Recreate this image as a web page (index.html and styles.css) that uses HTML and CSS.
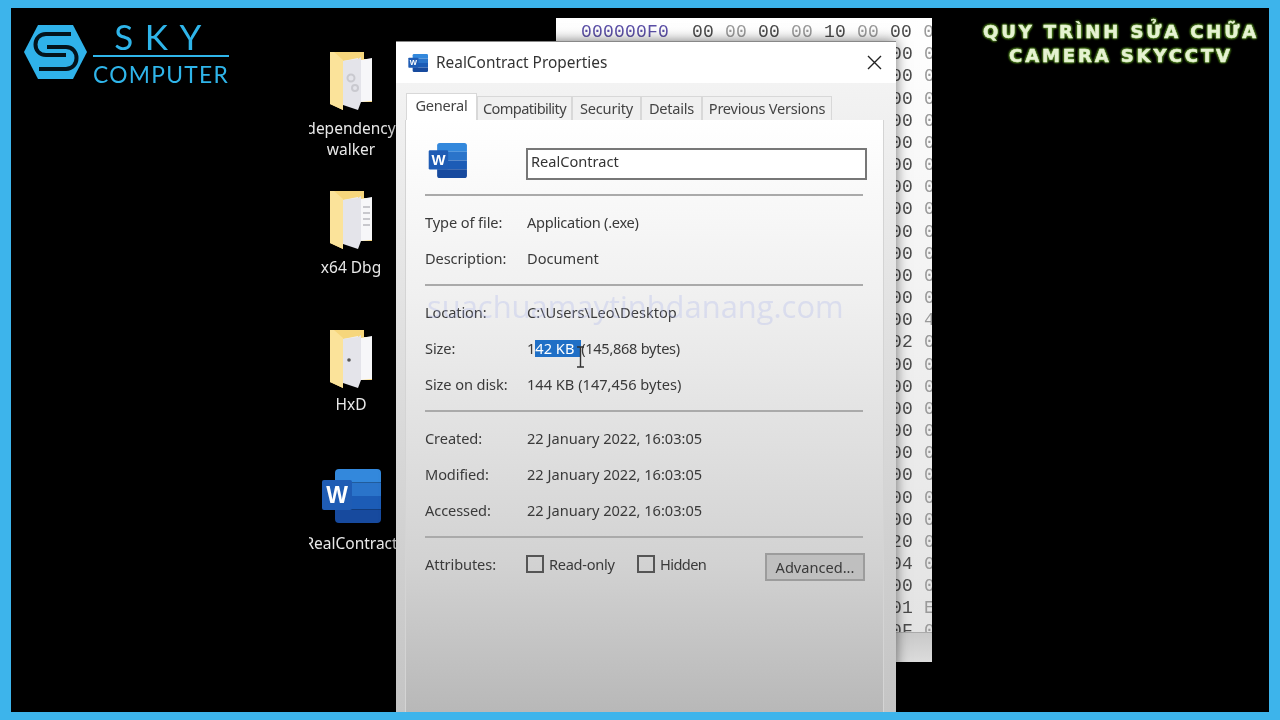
FILE: index.html
```html
<!DOCTYPE html>
<html lang="en">
<head>
<meta charset="utf-8">
<title>RealContract Properties</title>
<link rel="stylesheet" href="styles.css">
</head>
<body>
<svg class="defs" width="0" height="0" aria-hidden="true">
  <symbol id="folder" viewBox="0 0 42 60">
    <path d="M0 0H34V7H42V50H13V58L0 52Z" fill="#f6d67c"/>
    <path d="M0 0H4L13 8V58L0 52Z" fill="#fbe39a"/>
    <path d="M13 9L28 6V48L13 52Z" fill="#f0f0f2"/>
    <path d="M28 7L31 5V50L28 58L13 53V9Z" fill="#e4e4ea"/>
    <path d="M31 8L42 6V49L31 50Z" fill="#f7f7f9"/>
  </symbol>
  <symbol id="wordicon" viewBox="0 0 60 54">
    <path d="M18 0H56Q60 0 60 4V13.5H14V4Q14 0 18 0Z" fill="#3388dc"/>
    <rect x="14" y="13.5" width="46" height="13.5" fill="#2a74ca"/>
    <rect x="14" y="27" width="46" height="13.5" fill="#1c5cb6"/>
    <path d="M14 40.5H60V50Q60 54 56 54H18Q14 54 14 50Z" fill="#174a9e"/>
    <rect x="1" y="11" width="30" height="30" rx="2" fill="#1f5cb4"/>
    <text x="16" y="34" class="word-w">W</text>
  </symbol>
</svg>
<div class="frame">
  <main class="stage">
    <div class="logo">
      <svg class="logo-mark" viewBox="0 0 63 54" aria-hidden="true">
        <path d="M14 0H49L63 27L49 54H14L0 27Z" fill="#2fb2ea"/>
        <path d="M47 9H22C8 9 8 30 22 30H42" fill="none" stroke="#04141c" stroke-width="4"/>
        <path d="M15 44H42C56 44 56 22 42 22H23" fill="none" stroke="#04141c" stroke-width="4"/>
      </svg>
      <div class="logo-text">
        <div class="logo-sky">SKY</div>
        <div class="logo-computer">COMPUTER</div>
      </div>
    </div>

    <div class="channel-title">
      <div>QUY TRÌNH SỬA CHỮA</div>
      <div>CAMERA SKYCCTV</div>
    </div>

    <section class="desktop">
      <div class="desk-icon">
        <svg class="folder-img" viewBox="0 0 42 60"><use href="#folder" width="42" height="60"/><circle cx="21" cy="26" r="3.5" class="mark"/><circle cx="25" cy="36" r="3" class="mark"/></svg>
        <div class="desk-label">dependency<br>walker</div>
      </div>
      <div class="desk-icon">
        <svg class="folder-img" viewBox="0 0 42 60"><use href="#folder" width="42" height="60"/><path d="M33 16H40M33 22H40M33 28H40M33 34H40" class="mark-line"/></svg>
        <div class="desk-label">x64 Dbg</div>
      </div>
      <div class="desk-icon">
        <svg class="folder-img" viewBox="0 0 42 60"><use href="#folder" width="42" height="60"/><circle cx="19" cy="30" r="1.8" class="mark-dark"/></svg>
        <div class="desk-label tight">HxD</div>
      </div>
      <div class="desk-icon">
        <svg class="word-desk"><use href="#wordicon"/></svg>
        <div class="desk-label loose">RealContract</div>
      </div>
    </section>

    <section class="hex">
      <div class="hex-rows">
        <div class="hex-row first"><span class="off">000000F0</span>  00 <i>00</i> 00 <i>00</i> 10 <i>00</i> 00 <i>00</i></div>
        <div class="hex-row">00 <i>00</i></div>
        <div class="hex-row">00 <i>00</i></div>
        <div class="hex-row">00 <i>00</i></div>
        <div class="hex-row">00 <i>00</i></div>
        <div class="hex-row">00 <i>00</i></div>
        <div class="hex-row">00 <i>00</i></div>
        <div class="hex-row">00 <i>00</i></div>
        <div class="hex-row">00 <i>00</i></div>
        <div class="hex-row">00 <i>00</i></div>
        <div class="hex-row">00 <i>00</i></div>
        <div class="hex-row">00 <i>00</i></div>
        <div class="hex-row">00 <i>00</i></div>
        <div class="hex-row">00 <i>40</i></div>
        <div class="hex-row">02 <i>00</i></div>
        <div class="hex-row">00 <i>00</i></div>
        <div class="hex-row">00 <i>00</i></div>
        <div class="hex-row">00 <i>00</i></div>
        <div class="hex-row">00 <i>00</i></div>
        <div class="hex-row">00 <i>00</i></div>
        <div class="hex-row">00 <i>00</i></div>
        <div class="hex-row">00 <i>00</i></div>
        <div class="hex-row">00 <i>00</i></div>
        <div class="hex-row">20 <i>00</i></div>
        <div class="hex-row">04 <i>00</i></div>
        <div class="hex-row">00 <i>00</i></div>
        <div class="hex-row">01 <i>E0</i></div>
        <div class="hex-row">0F <i>00</i></div>
      </div>
      <div class="hex-status"></div>
    </section>

    <section class="dialog">
      <header class="titlebar">
        <svg class="title-icon"><use href="#wordicon"/></svg>
        <span class="title-text">RealContract Properties</span>
        <svg class="close" viewBox="0 0 15 15" aria-hidden="true"><path d="M1 1L14 14M14 1L1 14" stroke="#222" stroke-width="1.4" fill="none"/></svg>
      </header>
      <nav class="tabs">
        <span class="tab active">General</span>
        <span class="tab t-compat">Compatibility</span>
        <span class="tab t-sec">Security</span>
        <span class="tab t-det">Details</span>
        <span class="tab t-prev">Previous Versions</span>
      </nav>
      <div class="panel">
        <div class="name-row">
          <svg class="file-icon"><use href="#wordicon"/></svg>
          <div class="name-input">RealContract</div>
        </div>
        <div class="sep"></div>
        <div class="group">
          <div class="row"><span class="lbl">Type of file:</span><span class="narrow">Application (.exe)</span></div>
          <div class="row"><span class="lbl">Description:</span><span>Document</span></div>
        </div>
        <div class="sep"></div>
        <div class="group">
          <div class="row"><span class="lbl">Location:</span><span>C:\Users\Leo\Desktop</span></div>
          <div class="row"><span class="lbl">Size:</span><span>1<span class="sel">42 KB </span><span class="narrow">(145,868 bytes)</span></span></div>
          <div class="row"><span class="lbl">Size on disk:</span><span>144 KB (147,456 bytes)</span></div>
        </div>
        <div class="sep"></div>
        <div class="group">
          <div class="row"><span class="lbl">Created:</span><span>22 January 2022, 16:03:05</span></div>
          <div class="row"><span class="lbl">Modified:</span><span>22 January 2022, 16:03:05</span></div>
          <div class="row"><span class="lbl">Accessed:</span><span>22 January 2022, 16:03:05</span></div>
        </div>
        <div class="sep"></div>
        <div class="group">
          <div class="row">
            <span class="lbl">Attributes:</span>
            <span class="check"><span class="box"></span>Read-only</span>
            <span class="check c-hidden"><span class="box"></span>Hidden</span>
            <span class="btn">Advanced...</span>
          </div>
        </div>
      </div>
      <div class="watermark">suachuamaytinhdanang.com</div>
      <svg class="ibeam" viewBox="0 0 9 22" aria-hidden="true"><path d="M1 1H8M4.5 1V21M1 21H8" stroke="#333" stroke-width="1.4" fill="none"/></svg>
    </section>
  </main>
</div>
</body>
</html>
```
FILE: styles.css
```css
* { box-sizing: border-box; }
html, body { margin: 0; padding: 0; background: #3db4eb; }
.defs { position: absolute; }
.frame {
  width: 1280px;
  height: 720px;
  padding: 8px 11px;
  background: #3db4eb;
  overflow: hidden;
}
.stage {
  position: relative;
  width: 1258px;
  height: 704px;
  background: #000;
  overflow: hidden;
  font-family: "Noto Sans", "Open Sans", sans-serif;
  filter: blur(.4px);
}

/* logo */
.logo {
  position: absolute;
  left: 13px;
  top: 15px;
  display: flex;
  gap: 6px;
  color: #2fb5ea;
}
.logo-mark { width: 63px; height: 54px; margin-top: 2px; }
.logo-text { width: 136px; font-family: "Lato", sans-serif; font-weight: 400; }
.logo-sky {
  height: 34px;
  border-bottom: 2px solid #2fb5ea;
  font-size: 35px;
  line-height: 27px;
  letter-spacing: 11.5px;
  text-align: center;
  padding-left: 5px;
}
.logo-computer {
  margin-top: 3px;
  font-size: 22.8px;
  line-height: 28px;
  letter-spacing: 1.3px;
  white-space: nowrap;
}

/* top-right caption */
.channel-title {
  position: absolute;
  left: 950px;
  top: 11.5px;
  width: 320px;
  text-align: center;
  font-family: "DejaVu Sans", sans-serif;
  font-weight: 700;
  font-size: 18px;
  line-height: 24.5px;
  letter-spacing: 2.9px;
  color: #e6f3d2;
  -webkit-text-stroke: .5px #e6f3d2;
  text-shadow: 0 0 2px #4a7a1c, 0 0 3px #4a7a1c, 1px 1px 2px #3f6a18, -1px -1px 2px #3f6a18, 1px -1px 2px #3f6a18, -1px 1px 2px #3f6a18;
  white-space: nowrap;
}

/* desktop icons */
.desktop {
  position: absolute;
  left: 298px;
  top: 44px;
  width: 87px;
  height: 660px;
  padding-right: 3px;
  overflow: hidden;
  color: #e8e8e8;
  font-size: 15.5px;
  line-height: 21px;
}
.desk-icon {
  height: 139px;
  display: flex;
  flex-direction: column;
  align-items: center;
}
.folder-img { width: 42px; height: 60px; flex: none; }
.mark { fill: none; stroke: #c9c9cf; stroke-width: 2; }
.mark-line { fill: none; stroke: #b9b9bf; stroke-width: 1.5; }
.mark-dark { fill: #555; }
.word-desk { width: 60px; height: 54px; flex: none; }
.desk-label {
  margin-top: 6px;
  text-align: center;
  white-space: nowrap;
}
.desk-label.tight { margin-top: 4px; }
.desk-label.loose { margin-top: 10px; }

/* hex editor behind */
.hex {
  position: absolute;
  left: 545px;
  top: 10px;
  width: 376px;
  height: 644px;
  background: linear-gradient(#fff, #e2e2e2);
  display: flex;
  flex-direction: column;
  overflow: hidden;
}
.hex-rows {
  height: 614px;
  padding-top: 3px;
  overflow: hidden;
  font-family: "Liberation Mono", monospace;
  font-size: 18px;
  line-height: 22.17px;
  letter-spacing: .2px;
  color: #4a4a4a;
}
.hex-rows i { font-style: normal; color: #9a9a9a; }
.hex-row { padding-left: 335px; white-space: pre; }
.hex-row.first { padding-left: 25px; }
.off { color: #5b4fa6; margin-right: 1px; }
.hex-status {
  height: 30px;
  background: linear-gradient(#c9c9c9, #dcdcdc);
  border-top: 1px solid #aaa;
}

/* properties dialog */
.dialog {
  position: absolute;
  left: 385px;
  top: 33px;
  width: 500px;
  height: 671px;
  background: linear-gradient(#f6f6f6, #c4c4c4);
  border-top: 1px solid #888;
  box-shadow: 0 0 12px rgba(0,0,0,.55);
  color: #3a3a3a;
  font-size: 14.6px;
}
.titlebar {
  height: 41px;
  background: #fff;
  display: flex;
  align-items: center;
  padding: 0 14px 0 12px;
}
.title-icon { width: 20px; height: 18px; margin-right: 8px; }
.title-text { flex: 1; font-size: 15.4px; color: #333; }
.close { width: 15px; height: 15px; }
.tabs {
  height: 37px;
  padding-left: 10px;
  display: flex;
  align-items: flex-end;
}
.tab {
  height: 24px;
  line-height: 22px;
  background: #f0f0f0;
  border: 1px solid #d8d8d8;
  border-bottom: 0;
  text-align: center;
  color: #444;
  letter-spacing: -.25px;
}
.tab.active { width: 71px; height: 27px; line-height: 23px; background: #fff; }
.tab.t-compat { width: 95px; letter-spacing: -.6px; }
.t-sec { width: 69px; }
.t-det { width: 61px; }
.t-prev { width: 130px; }
.panel {
  position: relative;
  margin: 0 12px 0 9px;
  height: 592px;
  padding: 23px 20px 0 19px;
  background: linear-gradient(#fff 0%, #f0f0f0 30%, #d2d2d2 75%, #b8b8b8 100%);
  border: 1px solid #d4d4d4;
  border-bottom: 0;
  border-top: 0;
}
.name-row { height: 51px; display: flex; align-items: flex-start; }
.file-icon { width: 39px; height: 35px; margin: 0 59px 0 3px; flex: none; }
.name-input {
  width: 341px;
  height: 32px;
  margin-top: 5px;
  border: 2px solid #777;
  background: #fff;
  padding-left: 3px;
  line-height: 23px;
  color: #333;
  flex: none;
}
.sep { height: 2px; margin: 0 0 8px; background: #aaa; }
.group { margin-bottom: 8px; }
.row { height: 36px; display: flex; align-items: center; white-space: pre; }
.lbl { width: 102px; flex: none; }
.row .lbl { letter-spacing: -.1px; }
.narrow { letter-spacing: -.3px; }
.sel { background: #1f6fc6; color: #fff; display: inline-block; line-height: 17px; padding-right: 3px; }
.check { display: flex; align-items: center; flex: none; width: 111px; margin-left: -1px; letter-spacing: -.3px; }
.box {
  width: 18px;
  height: 18px;
  border: 2px solid #555;
  margin-right: 5px;
  flex: none;
}
.check.c-hidden { width: 128px; margin-left: 0; letter-spacing: -.6px; }
.btn {
  flex: none;
  width: 100px;
  height: 28px;
  line-height: 24px;
  text-align: center;
  border: 2px solid #9c9c9c;
  background: #bfbfbf;
  margin-top: 5px;
}
.watermark {
  position: absolute;
  left: 31px;
  top: 246px;
  font-family: "Open Sans", sans-serif;
  font-size: 30.9px;
  line-height: 36px;
  color: rgba(170,180,235,.3);
  white-space: nowrap;
}
.ibeam {
  position: absolute;
  left: 180px;
  top: 304px;
  width: 9px;
  height: 22px;
}
.word-w {
  font-family: "Liberation Sans", sans-serif;
  font-weight: 700;
  font-size: 23px;
  text-anchor: middle;
  fill: #fff;
}
```
